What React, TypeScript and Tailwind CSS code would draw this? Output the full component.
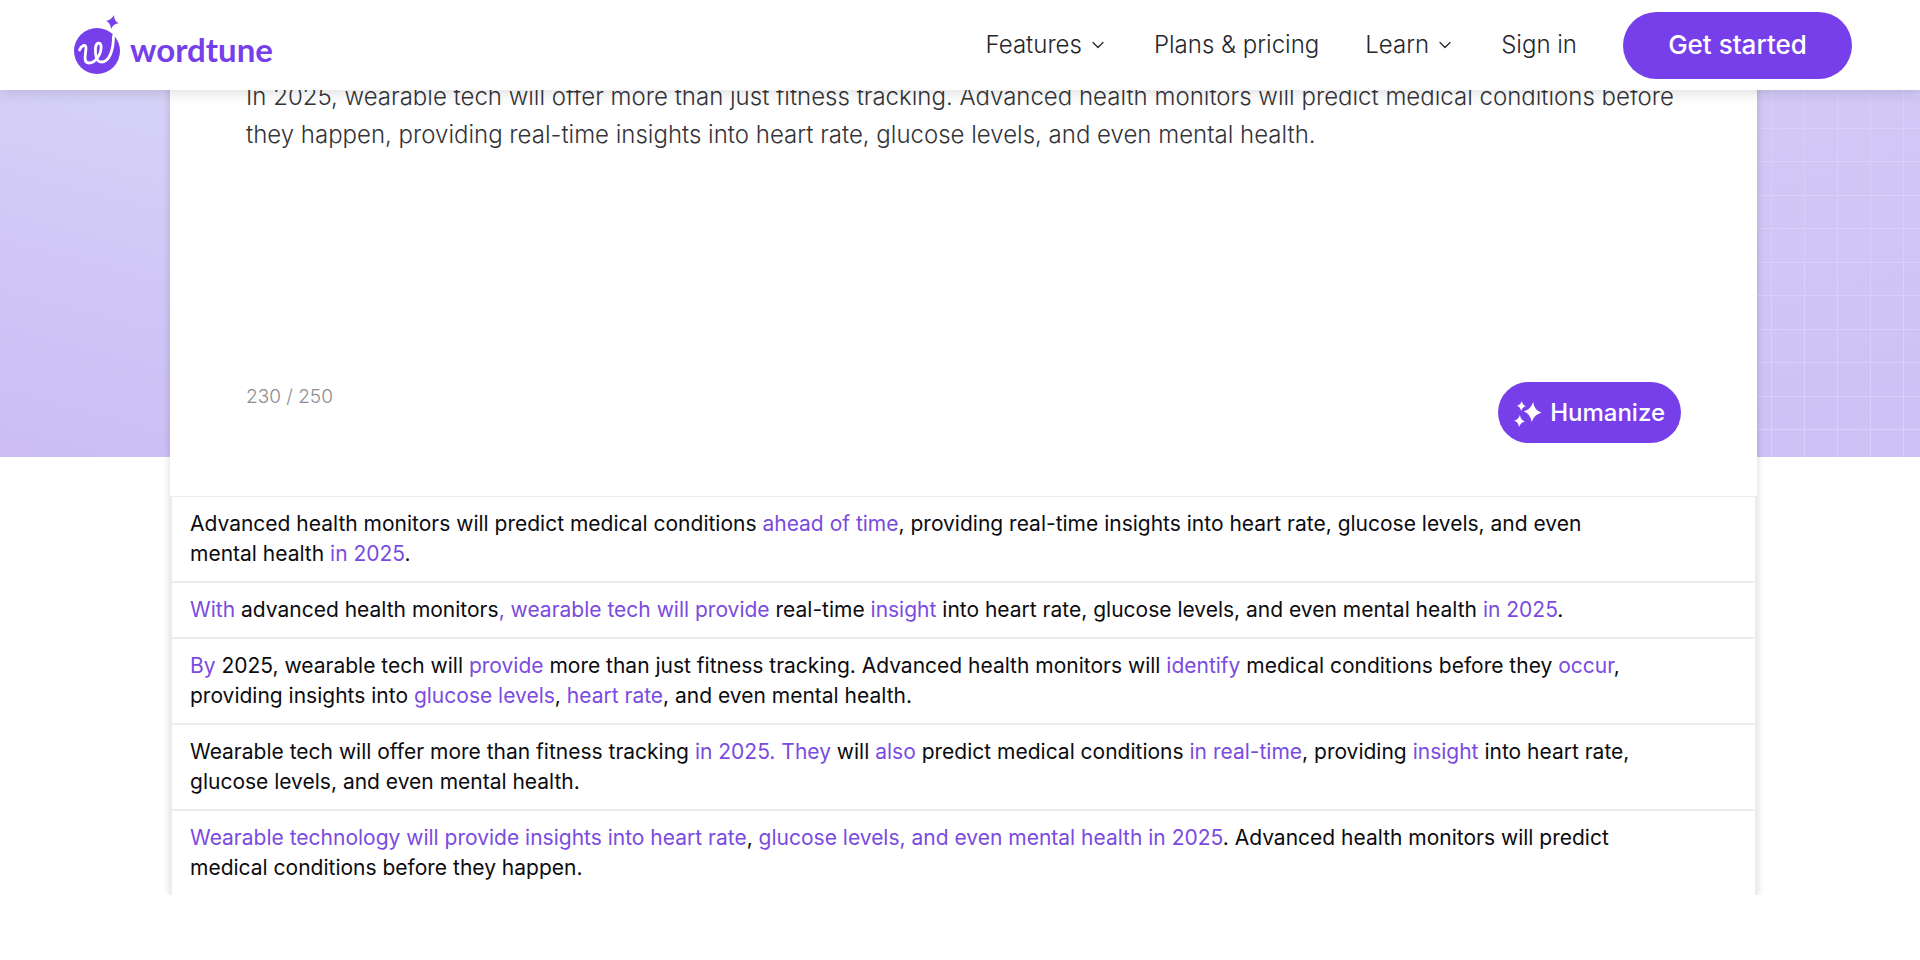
import { ChevronDown } from "lucide-react";

type Part = string | { hl: string };

const prompt =
  "In 2025, wearable tech will offer more than just fitness tracking. Advanced health monitors will predict medical conditions before they happen, providing real-time insights into heart rate, glucose levels, and even mental health.";

const navItems = [
  { label: "Features", menu: true },
  { label: "Plans & pricing", menu: false },
  { label: "Learn", menu: true },
  { label: "Sign in", menu: false },
];

const suggestions: Part[][] = [
  [
    "Advanced health monitors will predict medical conditions ",
    { hl: "ahead of time" },
    ", providing real-time insights into heart rate, glucose levels, and even mental health ",
    { hl: "in 2025" },
    ".",
  ],
  [
    { hl: "With" },
    " advanced health monitors",
    { hl: ", wearable tech will provide" },
    " real-time ",
    { hl: "insight" },
    " into heart rate, glucose levels, and even mental health ",
    { hl: "in 2025" },
    ".",
  ],
  [
    { hl: "By" },
    " 2025, wearable tech will ",
    { hl: "provide" },
    " more than just fitness tracking. Advanced health monitors will ",
    { hl: "identify" },
    " medical conditions before they ",
    { hl: "occur" },
    ", providing insights into ",
    { hl: "glucose levels" },
    ", ",
    { hl: "heart rate" },
    ", and even mental health.",
  ],
  [
    "Wearable tech will offer more than fitness tracking ",
    { hl: "in 2025. They" },
    " will ",
    { hl: "also" },
    " predict medical conditions ",
    { hl: "in real-time" },
    ", providing ",
    { hl: "insight" },
    " into heart rate, glucose levels, and even mental health.",
  ],
  [
    { hl: "Wearable technology will provide insights into heart rate" },
    ", ",
    { hl: "glucose levels, and even mental health in 2025" },
    ". Advanced health monitors will predict medical conditions before they happen.",
  ],
];

// four-pointed star, 20 units tall, centred on x/y
function Star({ x, y, scale, tilt = 4 }: { x: number; y: number; scale: number; tilt?: number }) {
  return (
    <path
      transform={`translate(${x} ${y}) rotate(${tilt}) scale(${scale})`}
      d="M0-10Q1.500-2 9 0Q2 2 0 10Q-2 2-9 0Q-2-2 0-10z"
      fill="currentColor"
    />
  );
}

function Logo() {
  return (
    <a href="#" aria-label="wordtune home" className="flex items-center gap-2 text-[#763fe9]">
      <svg viewBox="0 0 48 60" className="w-12 h-[60px]" aria-hidden="true">
        <circle cx="23" cy="36" r="23" fill="currentColor" />
        <path
          d="M5.500 35C7 31 12 28 12 33C12 38 8.500 48 15 48C22 48 28 38 27 30.500C26.300 26.500 22 27.500 21.500 33C21 40 22 47 27.500 47C35 47 39.500 36 39.500 21"
          fill="none"
          stroke="#fff"
          strokeWidth="2.800"
          strokeLinecap="round"
          strokeLinejoin="round"
        />
        <Star x={38.5} y={7} scale={0.72} tilt={12} />
      </svg>
      <span className="pt-2 font-['Lato',sans-serif] font-bold text-[33px] leading-10">wordtune</span>
    </a>
  );
}

function Sparkles() {
  return (
    <svg viewBox="0 0 28 28" className="w-7 h-7" aria-hidden="true">
      <Star x={18.5} y={13} scale={1} />
      <Star x={7.5} y={7} scale={0.5} />
      <Star x={5.5} y={22} scale={0.6} />
    </svg>
  );
}

export default function App() {
  return (
    <div className="min-h-screen bg-white font-['Inter',sans-serif]">
      <header className="sticky top-0 z-10 h-[90px] pl-[74px] pr-[68px] flex items-center justify-between bg-white shadow-[0_2px_14px_rgba(0,0,0,0.14)]">
        <Logo />
        <nav className="flex items-center gap-[46px] text-2xl font-light text-[#26272d]">
          {navItems.map(({ label, menu }) =>
            menu ? (
              <button key={label} className="flex items-center gap-1.5">
                {label}
                <ChevronDown className="w-5 h-5" strokeWidth={1.5} />
              </button>
            ) : (
              <a key={label} href="#">
                {label}
              </a>
            )
          )}
          <button className="h-[67px] w-[229px] rounded-full bg-[#763fe9] text-white text-[26px] font-medium">
            Get started
          </button>
        </nav>
      </header>

      <main className="relative overflow-hidden pl-[170px] pr-[163px]">
        <div className="absolute inset-x-0 top-0 h-[367px] flex">
          <div className="flex-1 bg-[linear-gradient(195deg,#d6d2f8_35%,#cfc5f6_70%,#cbbdf4_100%)]" />
          <div className="flex-1 bg-[linear-gradient(165deg,#d3cbf7_20%,#cdc0f5_100%)]">
            <div className="h-full bg-[linear-gradient(90deg,#d9cffb_1px,transparent_1px),linear-gradient(#d9cffb_1px,transparent_1px,transparent_33px,#d9cffb_33px,#d9cffb_34px,transparent_34px)] bg-[length:33px_67px] bg-[position:19px_38px]" />
          </div>
        </div>

        <section className="relative -mt-3 bg-white shadow-[0_0_8px_rgba(0,0,0,0.16)]">
          <div className="h-[418px] px-[76px]">
            <textarea
              aria-label="Text to humanize"
              defaultValue={prompt}
              className="block w-full h-[304px] resize-none outline-none text-2xl leading-[38px] font-light text-[#333338]"
            />
            <div className="flex items-start justify-between">
              <span className="text-[19px] leading-[30px] text-[#8d8d93] font-light">230 / 250</span>
              <button className="h-[61px] px-4 flex items-center gap-2 rounded-full bg-[#763fe9] text-white text-2xl font-medium">
                <Sparkles />
                Humanize
              </button>
            </div>
          </div>
          <ul className="border-t border-x-2 border-[#ededf0] divide-y-2 divide-[#ededf0] text-[21px] leading-[30px] text-[#0c0c10]">
            {suggestions.map((parts, i) => (
              <li key={i} className="py-3 pl-[18px] pr-28">
                {parts.map((part, j) =>
                  typeof part === "string" ? (
                    part
                  ) : (
                    <span key={j} className="text-[#7a4be0]">
                      {part.hl}
                    </span>
                  )
                )}
              </li>
            ))}
          </ul>
        </section>
      </main>
    </div>
  );
}
